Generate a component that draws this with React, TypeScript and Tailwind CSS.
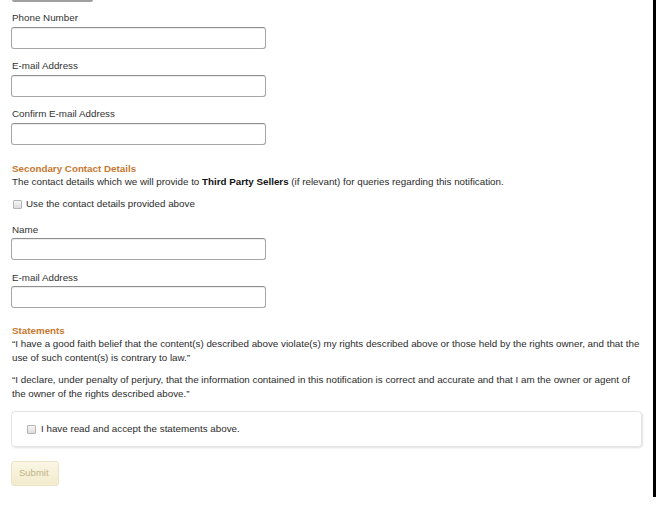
import React from "react"

const inputCls =
  "block h-[22px] w-[255px] rounded-[3px] border border-[#a6a6a6] border-t-[#8f8f8f] bg-white shadow-[inset_0_1px_0_rgba(0,0,0,0.07)]"

function Field({ label, className, gap = "mt-[2px]" }: { label: string; className?: string; gap?: string }) {
  return (
    <div className={className}>
      <div className="ml-px leading-[14px] text-[#333]">{label}</div>
      <div className={`${gap} ${inputCls}`} />
    </div>
  )
}

function Check() {
  return (
    <span className="inline-block h-[9px] w-[9px] shrink-0 rounded-[1px] border border-[#b5b5b5] bg-gradient-to-b from-[#f6f6f6] to-[#dedede]" />
  )
}

export default function App() {
  return (
    <div
      className="flex h-[511px] w-[656px] overflow-hidden bg-white text-[9.8px] text-[#2b2b2b]"
      style={{ fontFamily: '"Liberation Sans", Arial, sans-serif' }}
    >
      <main className="flex-1 pl-[11px]">
        {/* bottom edge of a control cut off at the top */}
        <div className="ml-px h-[2px] w-[81px] rounded-b-[2px] bg-[#a0a0a0]" />

        <Field label="Phone Number" className="mt-[9px]" />
        <Field label="E-mail Address" className="mt-[10px]" />
        <Field label="Confirm E-mail Address" className="mt-[10px]" />

        <h3 className="ml-px mt-[17px] font-bold leading-[13px] text-[#c6782f]">Secondary Contact Details</h3>
        <p className="ml-px leading-[14px]">
          The contact details which we will provide to <b className="text-[#111]">Third Party Sellers</b> (if
          relevant) for queries regarding this notification.
        </p>

        <label className="ml-[2px] mt-[8px] flex items-center gap-[4px] leading-[14px]">
          <Check />
          <span>Use the contact details provided above</span>
        </label>

        <Field label="Name" className="mt-[12px]" gap="mt-[1px]" />
        <Field label="E-mail Address" className="mt-[11px]" gap="mt-[1px]" />

        <h3 className="ml-px mt-[16px] font-bold leading-[13px] text-[#c6782f]">Statements</h3>
        <div className="ml-px w-[634px] leading-[14px]">
          <p>
            “I have a good faith belief that the content(s) described above violate(s) my rights described above or
            those held by the rights owner, and that the use of such content(s) is contrary to law.”
          </p>
          <p className="mt-[8px]">
            “I declare, under penalty of perjury, that the information contained in this notification is correct and
            accurate and that I am the owner or agent of the owner of the rights described above.”
          </p>
        </div>

        <div className="mt-[10px] flex h-[36px] w-[631px] items-center rounded-[4px] border border-[#e4e4e4] pl-[15px] shadow-[1px_1px_2px_rgba(0,0,0,0.12)]">
          <label className="flex items-center gap-[5px]">
            <Check />
            <span>I have read and accept the statements above.</span>
          </label>
        </div>

        <button className="mt-[14px] flex h-[25px] w-[48px] items-center rounded-[3px] border border-[#ebe4c8] bg-gradient-to-b from-[#faf6e4] to-[#f2ebcd] pl-[7px] text-[9.5px] text-[#c2b386]">
          Submit
        </button>
      </main>
      <div className="h-[497px] w-[3px] bg-black" />
    </div>
  )
}
